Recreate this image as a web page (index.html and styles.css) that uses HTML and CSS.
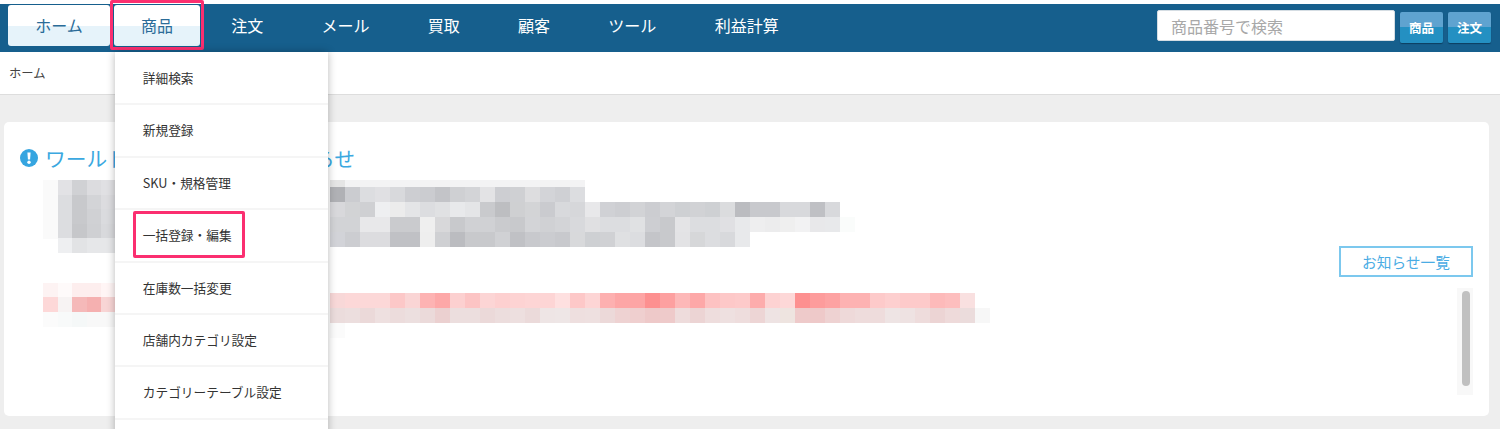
FILE: index.html
```html
<!DOCTYPE html>
<html lang="ja">
<head>
<meta charset="utf-8">
<title>ホーム</title>
<link rel="stylesheet" href="styles.css">
</head>
<body>
<header class="topbar">
  <nav class="nav">
    <a class="nav-item is-light">ホーム</a>
    <div class="nav-item is-light is-open">商品
      <ul class="menu">
        <li>詳細検索</li>
        <li>新規登録</li>
        <li>SKU・規格管理</li>
        <li><span class="mark">一括登録・編集</span></li>
        <li>在庫数一括変更</li>
        <li>店舗内カテゴリ設定</li>
        <li>カテゴリーテーブル設定</li>
        <li></li>
      </ul>
    </div>
    <a class="nav-item">注文</a>
    <a class="nav-item">メール</a>
    <a class="nav-item">買取</a>
    <a class="nav-item">顧客</a>
    <a class="nav-item">ツール</a>
    <a class="nav-item">利益計算</a>
  </nav>
  <div class="search">
    <input class="search-input" type="text" placeholder="商品番号で検索">
    <button class="search-btn">商品</button>
    <button class="search-btn">注文</button>
  </div>
</header>
<div class="crumbs">ホーム</div>
<section class="card">
  <div class="card-main">
    <h2 class="card-title">
      <svg class="alert" viewBox="0 0 18 18" width="18" height="18"><circle cx="9" cy="9" r="9" fill="#36a5e0"/><path d="M7.4 3.4h3.2l-.5 7.2H7.9z" fill="#fff"/><circle cx="9" cy="13.2" r="1.7" fill="#fff"/></svg>
      ワールドショップからのお知らせ
    </h2>
    <svg class="mosaic" viewBox="40 178 960 165" width="960" height="165" shape-rendering="crispEdges">
      <g transform="translate(43 180)">
        <rect fill="#fafafa"/><rect x="15" fill="#e2e2e5"/><rect x="29" fill="#d0d1d4"/><rect x="44" fill="#dcdcdf"/><rect x="58" fill="#e0e0e3"/>
        <rect y="15" fill="#fafafa"/><rect x="15" y="15" fill="#dcdde0"/><rect x="29" y="15" fill="#c8c9cc"/><rect x="44" y="15" fill="#d3d4d7"/><rect x="58" y="15" fill="#dcdcdf"/>
        <rect y="29" fill="#fafafa"/><rect x="15" y="29" fill="#dcdde0"/><rect x="29" y="29" fill="#c8c9cc"/><rect x="44" y="29" fill="#d0d1d4"/><rect x="58" y="29" fill="#dadbde"/>
        <rect y="44" fill="#fafafa"/><rect x="15" y="44" fill="#dcdde0"/><rect x="29" y="44" fill="#c6c7ca"/><rect x="44" y="44" fill="#cfd0d3"/><rect x="58" y="44" fill="#d8d9dc"/>
        <rect x="15" y="58" fill="#eeeff1"/><rect x="29" y="58" fill="#e2e3e5"/><rect x="44" y="58" fill="#e6e7e9"/><rect x="58" y="58" fill="#e6e7e9"/>
      </g>
      <g transform="translate(43 283)">
        <rect fill="#fdf3f3"/><rect x="15" fill="#fefafa"/><rect x="29" fill="#fdeeee"/><rect x="44" fill="#fdeeee"/><rect x="58" fill="#fff5f5"/>
        <rect y="14" fill="#fdd8d8"/><rect x="15" y="14" fill="#f7f3f3"/><rect x="29" y="14" fill="#f5b9b9"/><rect x="44" y="14" fill="#f5b0b0"/><rect x="58" y="14" fill="#f8d5d5"/>
        <rect y="29" fill="#fbfbfb"/><rect x="15" y="29" fill="#f8fafa"/><rect x="29" y="29" fill="#f5f8f8"/><rect x="44" y="29" fill="#f8f8f8"/><rect x="58" y="29" fill="#f8f8f8"/>
      </g>
      <g transform="translate(330 180)">
        <rect class="strip" fill="#e5e5e5"/><rect class="strip" x="15" width="240" fill="#f3f3f4"/>
      </g>
      <g transform="translate(330 187)">
        <rect fill="#b0b1b5"/><rect x="15" fill="#cbccd0"/><rect x="30" fill="#dcdde0"/><rect x="45" fill="#e0e0e3"/><rect x="60" fill="#d8d9dc"/><rect x="75" fill="#cdced2"/><rect x="90" fill="#cbccd0"/><rect x="105" fill="#c3c4c8"/><rect x="120" fill="#cfd0d3"/><rect x="135" fill="#d3d4d7"/><rect x="150" fill="#e3e3e5"/><rect x="165" fill="#cdced2"/><rect x="180" fill="#cfd0d3"/><rect x="195" fill="#dddddf"/><rect x="210" fill="#d3d4d8"/><rect x="225" fill="#cfd0d4"/><rect x="240" fill="#dcdde0"/>
      </g>
      <g transform="translate(330 202)">
        <rect fill="#d8d8db"/><rect x="15" fill="#d2d3d5"/><rect x="30" fill="#cfd0d3"/><rect x="45" fill="#eeeff1"/><rect x="60" fill="#ececec"/><rect x="75" fill="#e4e5e7"/><rect x="90" fill="#dcdde0"/><rect x="105" fill="#e0e1e3"/><rect x="120" fill="#e8e9eb"/><rect x="135" fill="#e4e5e7"/><rect x="150" fill="#c9cacd"/><rect x="165" fill="#bdbec1"/><rect x="180" fill="#cfd0d2"/><rect x="195" fill="#d3d4d6"/><rect x="210" fill="#cacbcf"/><rect x="225" fill="#d8d9dc"/><rect x="240" fill="#d6d7da"/><rect x="255" fill="#e8e8ea"/><rect x="270" fill="#d0d1d5"/><rect x="285" fill="#cdced2"/><rect x="300" fill="#d2d3d6"/><rect x="315" fill="#cccdd1"/><rect x="330" fill="#d3d4d7"/><rect x="345" fill="#ced0d3"/><rect x="360" fill="#d1d2d5"/><rect x="375" fill="#ced0d3"/><rect x="390" fill="#dbdcde"/><rect x="405" fill="#bbbcc0"/><rect x="420" fill="#c8c9cd"/><rect x="435" fill="#c8c9cd"/><rect x="450" fill="#d8d9dc"/><rect x="465" fill="#d8d9dc"/><rect x="480" fill="#bfc0c4"/><rect x="495" fill="#d8d9dc"/>
      </g>
      <g transform="translate(330 217)">
        <rect fill="#d2d3d6"/><rect x="15" fill="#d2d3d6"/><rect x="30" fill="#e8e8ea"/><rect x="45" fill="#e8e8ea"/><rect x="60" fill="#cacbce"/><rect x="75" fill="#cacbce"/><rect x="90" fill="#efefef"/><rect x="105" fill="#d8d8da"/><rect x="120" fill="#c8c9cc"/><rect x="135" fill="#d0d1d4"/><rect x="150" fill="#d0d1d4"/><rect x="165" fill="#cacbce"/><rect x="180" fill="#c8c9cc"/><rect x="195" fill="#d3d4d7"/><rect x="210" fill="#d0d1d4"/><rect x="225" fill="#d3d4d7"/><rect x="240" fill="#d8d9dc"/><rect x="255" fill="#e0e0e2"/><rect x="270" fill="#dcdde0"/><rect x="285" fill="#dcdde0"/><rect x="300" fill="#e0e1e3"/><rect x="315" fill="#cdced2"/><rect x="330" fill="#c8c9cc"/><rect x="345" fill="#e4e4e6"/><rect x="360" fill="#dcdde0"/><rect x="375" fill="#dcdde0"/><rect x="390" fill="#e0e0e3"/><rect x="405" fill="#e8e9eb"/><rect x="420" fill="#eeeeef"/><rect x="435" fill="#ececed"/><rect x="450" fill="#efefef"/><rect x="465" fill="#f2f2f3"/><rect x="480" fill="#e8e8ea"/><rect x="495" fill="#e8e9eb"/><rect x="510" fill="#fafcfb"/>
      </g>
      <g transform="translate(330 232)">
        <rect fill="#d2d3d8"/><rect x="15" fill="#cccdd1"/><rect x="30" fill="#dcdcdf"/><rect x="45" fill="#dcdcdf"/><rect x="60" fill="#c0c1c5"/><rect x="75" fill="#c0c1c5"/><rect x="90" fill="#eeeeee"/><rect x="105" fill="#cfd0d3"/><rect x="120" fill="#bbbcc0"/><rect x="135" fill="#c8c9cc"/><rect x="150" fill="#c8c9cc"/><rect x="165" fill="#d0d1d4"/><rect x="180" fill="#c0c1c5"/><rect x="195" fill="#c8c9cd"/><rect x="210" fill="#cbccd0"/><rect x="225" fill="#c8c9cd"/><rect x="240" fill="#d8d9db"/><rect x="255" fill="#ced0d3"/><rect x="270" fill="#d0d1d4"/><rect x="285" fill="#dfe0e2"/><rect x="300" fill="#dcdde0"/><rect x="315" fill="#c4c5c9"/><rect x="330" fill="#c8c9cc"/><rect x="345" fill="#e3e3e5"/><rect x="360" fill="#d6d7d9"/><rect x="375" fill="#dcdde0"/><rect x="390" fill="#d8d9dc"/><rect x="405" fill="#e8e9eb"/>
      </g>
      <g transform="translate(330 293)">
        <rect fill="#f8d8d8"/><rect x="15" fill="#fcd8d8"/><rect x="30" fill="#fcd8d8"/><rect x="45" fill="#fcd8d8"/><rect x="60" fill="#fcc8c8"/><rect x="75" fill="#fad5d5"/><rect x="90" fill="#fdb3b3"/><rect x="105" fill="#fda8a8"/><rect x="120" fill="#fcd0d0"/><rect x="135" fill="#fcc4c4"/><rect x="150" fill="#fcd5d5"/><rect x="165" fill="#fdd0d0"/><rect x="180" fill="#fdd3d3"/><rect x="195" fill="#fdd5d5"/><rect x="210" fill="#fdd5d5"/><rect x="225" fill="#fee0e0"/><rect x="240" fill="#fdc8c8"/><rect x="255" fill="#fdd5d5"/><rect x="270" fill="#fdb0b0"/><rect x="285" fill="#fda6a6"/><rect x="300" fill="#fda5a5"/><rect x="315" fill="#fd9090"/><rect x="330" fill="#fda0a0"/><rect x="345" fill="#fdb8b8"/><rect x="360" fill="#fda8a8"/><rect x="375" fill="#fdc2c2"/><rect x="390" fill="#fdc8c8"/><rect x="405" fill="#fdcaca"/><rect x="420" fill="#fdacac"/><rect x="435" fill="#fdd2d2"/><rect x="450" fill="#fdd8d8"/><rect x="465" fill="#fd9090"/><rect x="480" fill="#fd9c9c"/><rect x="495" fill="#fda2a2"/><rect x="510" fill="#fdb2b2"/><rect x="525" fill="#fdb2b2"/><rect x="540" fill="#fdcaca"/><rect x="555" fill="#fdcfcf"/><rect x="570" fill="#fdcaca"/><rect x="585" fill="#fdcaca"/><rect x="600" fill="#fdbaba"/><rect x="615" fill="#fdbebe"/><rect x="630" fill="#f9e0e0"/>
      </g>
      <g transform="translate(330 308)">
        <rect fill="#ebdcdc"/><rect x="15" fill="#ecdede"/><rect x="30" fill="#ebd9d9"/><rect x="45" fill="#eee0e0"/><rect x="60" fill="#ecdcdc"/><rect x="75" fill="#ecdfdf"/><rect x="90" fill="#ebdada"/><rect x="105" fill="#ebd0d0"/><rect x="120" fill="#ecdede"/><rect x="135" fill="#ecdede"/><rect x="150" fill="#ebd9d9"/><rect x="165" fill="#ecdddd"/><rect x="180" fill="#eddfdf"/><rect x="195" fill="#ebdada"/><rect x="210" fill="#eee5e5"/><rect x="225" fill="#eee6e6"/><rect x="240" fill="#eedfdf"/><rect x="255" fill="#eee0e0"/><rect x="270" fill="#ecd9d9"/><rect x="285" fill="#eed2d2"/><rect x="300" fill="#efcfcf"/><rect x="315" fill="#eec9c9"/><rect x="330" fill="#eecaca"/><rect x="345" fill="#eedcdc"/><rect x="360" fill="#ecd4d4"/><rect x="375" fill="#eedddd"/><rect x="390" fill="#eee0e0"/><rect x="405" fill="#eedddd"/><rect x="420" fill="#edd5d5"/><rect x="435" fill="#eee3e3"/><rect x="450" fill="#eee4e0"/><rect x="465" fill="#eecaca"/><rect x="480" fill="#eec9c9"/><rect x="495" fill="#eed2d2"/><rect x="510" fill="#eed9d9"/><rect x="525" fill="#eedcdc"/><rect x="540" fill="#eedcdc"/><rect x="555" fill="#eee4e4"/><rect x="570" fill="#eee2e2"/><rect x="585" fill="#eedcdc"/><rect x="600" fill="#ecd4d4"/><rect x="615" fill="#eedada"/><rect x="630" fill="#ebdcdc"/><rect x="645" fill="#f7f7f7"/>
      </g>
      <g transform="translate(330 323)">
        <rect fill="#fbfbfb"/>
      </g>
    </svg>
  </div>
  <aside class="card-side">
    <a class="more-btn">お知らせ一覧</a>
    <div class="scroll-track"><div class="scroll-thumb"></div></div>
  </aside>
</section>
</body>
</html>
```
FILE: styles.css
```css
* { box-sizing: border-box; }
html, body { height: 100%; }
body {
  margin: 0;
  overflow: hidden;
  background: #eeeeee;
  color: #333;
  font-family: "Noto Sans CJK JP", "Noto Sans", sans-serif;
}
.topbar {
  display: flex;
  justify-content: space-between;
  height: 52px;
  padding: 1px 9px 0 8px;
  background: #165f8d;
  border-top: 4px solid #fff;
}
.nav { display: flex; gap: 3.75px; }
.nav-item {
  position: relative;
  height: 41px;
  padding: 0 27.25px;
  border-radius: 3px;
  color: #fff;
  font-size: 16px;
  line-height: 40px;
}
.is-light {
  color: #2b6c98;
  background: linear-gradient(#fff 50%, #e6f3fa 50%);
}
.is-open::after {
  content: "";
  position: absolute;
  left: -4px;
  right: -4px;
  top: -5px;
  bottom: -4px;
  border: 3px solid #fb2f70;
  border-radius: 2px;
}
.menu {
  position: absolute;
  z-index: 5;
  top: 47px;
  left: 1px;
  width: 213px;
  margin: 0;
  padding: 1px 0 0;
  list-style: none;
  background: #fff;
  box-shadow: 0 0 8px rgba(0, 0, 0, .28);
}
.menu li {
  height: 52.4px;
  padding-left: 28px;
  border-bottom: 2px solid #f5f5f5;
  color: #333;
  font-size: 12.7px;
  line-height: 50.4px;
}
.mark { position: relative; display: inline-block; line-height: 20px; }
.mark::after {
  content: "";
  position: absolute;
  left: -10px;
  right: -13px;
  top: -14px;
  bottom: -13px;
  border: 3px solid #fb2f70;
  border-radius: 2px;
}
.search { display: flex; align-items: flex-start; gap: 5px; }
.search-input {
  width: 238px;
  height: 31px;
  margin-top: 5px;
  padding: 0 13px;
  border: 1px solid #d5dde3;
  border-radius: 2px;
  font: 16px "Noto Sans CJK JP", sans-serif;
  outline: none;
}
.search-input::placeholder { color: #a8a8a8; }
.search-btn {
  width: 43px;
  height: 31px;
  margin-top: 7px;
  padding: 0;
  border: 0;
  border-radius: 2px;
  color: #fff;
  background: linear-gradient(#5fa3d0 50%, #2490c2 50%);
  box-shadow: 0 1px 1px #0d3f60;
  font: 700 12.5px "Noto Sans CJK JP", sans-serif;
}
.crumbs {
  height: 43px;
  padding-left: 9px;
  background: #fff;
  border-bottom: 1px solid #dddddd;
  font-size: 12.3px;
  line-height: 43px;
  color: #444;
}
.card {
  display: flex;
  justify-content: space-between;
  width: 1485px;
  height: 294px;
  margin: 27px 0 0 4px;
  background: #fff;
  border-radius: 5px;
  overflow: hidden;
}
.card-main { padding-left: 16px; }
.card-title {
  display: flex;
  align-items: center;
  gap: 7px;
  height: 24px;
  margin: 24px 0 8px;
  color: #3ba8e0;
  font-size: 20.7px;
  font-weight: 400;
  line-height: 24px;
}
.alert { flex: none; }
.mosaic { display: block; margin-left: 20px; }
.mosaic rect { width: 15px; height: 15px; }
.mosaic .strip { height: 7px; }
.mosaic .strip[width] { width: 240px; }
.card-side {
  display: flex;
  flex-direction: column;
  align-items: flex-end;
  padding: 124px 16px 0 0;
}
.more-btn {
  width: 134px;
  height: 31px;
  border: 2px solid #7cc8ee;
  color: #4aace4;
  font-size: 14.7px;
  line-height: 27px;
  text-align: center;
}
.scroll-track {
  width: 16px;
  height: 107px;
  margin-top: 11px;
  padding: 3px 3px 0 5px;
  background: #f8f8f8;
}
.scroll-thumb {
  height: 95px;
  background: #c0c0c0;
  border-radius: 4px;
}
```
